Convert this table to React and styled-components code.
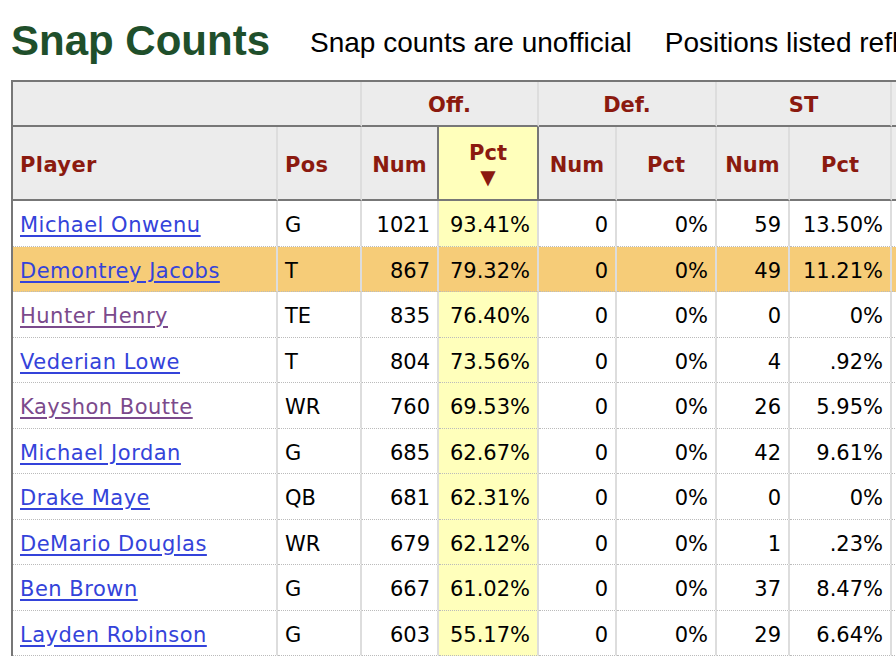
import React from "react";
import styled, { createGlobalStyle } from "styled-components";

const GlobalStyle = createGlobalStyle`
  html, body {
    margin: 0;
    padding: 0;
    background: #fff;
    overflow: hidden;
  }
`;

const Page = styled.div`
  width: 896px;
  height: 658px;
  overflow: hidden;
  padding: 20px 0 0 11px;
  box-sizing: border-box;
`;

const Heading = styled.div`
  display: flex;
  align-items: flex-start;
  white-space: nowrap;
  height: 41px;
  margin-bottom: 19px;
`;

const Title = styled.h1`
  margin: 0;
  font-family: "Liberation Sans", Arial, sans-serif;
  font-weight: bold;
  font-size: 42px;
  line-height: 41px;
  color: #1f4f2b;
`;

const Note = styled.span`
  font-family: "Liberation Sans", Arial, sans-serif;
  font-size: 28px;
  line-height: 32px;
  color: #000;
  margin: 7px 0 0 ${(p) => p.$gap}px;
`;

const Table = styled.table`
  border-collapse: separate;
  border-spacing: 0;
  table-layout: fixed;
  width: 982px;
  border-top: 2px solid #777;
  border-left: 2px solid #777;
  font-family: "DejaVu Sans", Verdana, sans-serif;
  font-size: 21px;
`;

const Col = styled.col`
  width: ${(p) => p.$w}px;
`;

const Th = styled.th`
  box-sizing: border-box;
  background: ${(p) => (p.$sorted ? "#ffffbb" : "#ececec")};
  color: #8b1a0f;
  font-weight: bold;
  text-align: ${(p) => p.$align || "center"};
  vertical-align: middle;
  padding: ${(p) => p.$shift}px 7px 0 7px;
  line-height: 24px;
  letter-spacing: ${(p) => (p.$align === "left" ? "0.4px" : "0")};
  height: ${(p) => p.$h}px;
  border-right: 2px solid ${(p) => (p.$dark ? "#777" : "#ddd")};
  border-bottom: 2px solid #777;
`;

const Arrow = styled.div`
  font-size: 20px;
  line-height: 24px;
`;

const Row = styled.tr`
  background: ${(p) => (p.$hl ? "#f6cc78" : "#fff")};
`;

const Td = styled.td`
  box-sizing: border-box;
  padding: 12px 7px 8px 7px;
  line-height: 24.5px;
  color: #000;
  white-space: nowrap;
  overflow: hidden;
  text-align: ${(p) => p.$align || "right"};
  background: ${(p) => (p.$sorted && !p.$hl ? "#ffffbb" : "transparent")};
  border-right: 2px solid #ddd;
  border-bottom: 1px dotted #bbb;
`;

const PlayerLink = styled.a`
  color: ${(p) => (p.$visited ? "#7b4a8c" : "#3443da")};
  text-decoration: underline;
  text-underline-offset: 3px;
  letter-spacing: 0.5px;
  cursor: pointer;
`;

const players = [
  ["Michael Onwenu", "G", 1021, "93.41%", 0, "0%", 59, "13.50%"],
  ["Demontrey Jacobs", "T", 867, "79.32%", 0, "0%", 49, "11.21%", "hl"],
  ["Hunter Henry", "TE", 835, "76.40%", 0, "0%", 0, "0%", "visited"],
  ["Vederian Lowe", "T", 804, "73.56%", 0, "0%", 4, ".92%"],
  ["Kayshon Boutte", "WR", 760, "69.53%", 0, "0%", 26, "5.95%", "visited"],
  ["Michael Jordan", "G", 685, "62.67%", 0, "0%", 42, "9.61%"],
  ["Drake Maye", "QB", 681, "62.31%", 0, "0%", 0, "0%"],
  ["DeMario Douglas", "WR", 679, "62.12%", 0, "0%", 1, ".23%"],
  ["Ben Brown", "G", 667, "61.02%", 0, "0%", 37, "8.47%"],
  ["Layden Robinson", "G", 603, "55.17%", 0, "0%", 29, "6.64%"],
];

const widths = [265, 84, 77, 100, 78, 100, 73, 102, 103];

const App = () => {
  return (
    <Page>
      <GlobalStyle />
      <Heading>
        <Title>Snap Counts</Title>
        <Note $gap={40}>Snap counts are unofficial</Note>
        <Note $gap={33}>Positions listed reflect the player's primary role</Note>
      </Heading>
      <Table>
        <colgroup>
          {widths.map((w, i) => (
            <Col key={i} $w={w} />
          ))}
        </colgroup>
        <thead>
          <tr>
            <Th colSpan={2} $h={45} $shift={2}></Th>
            <Th colSpan={2} $h={45} $shift={2}>Off.</Th>
            <Th colSpan={2} $h={45} $shift={2}>Def.</Th>
            <Th colSpan={2} $h={45} $shift={2}>ST</Th>
            <Th $h={45} $shift={2}></Th>
          </tr>
          <tr>
            <Th $align="left" $h={74} $shift={4}>Player</Th>
            <Th $align="left" $h={74} $shift={4}>Pos</Th>
            <Th $h={74} $shift={4} $dark>Num</Th>
            <Th $h={74} $shift={4} $sorted $dark>
              Pct
              <Arrow>▼</Arrow>
            </Th>
            <Th $h={74} $shift={4}>Num</Th>
            <Th $h={74} $shift={4}>Pct</Th>
            <Th $h={74} $shift={4}>Num</Th>
            <Th $h={74} $shift={4}>Pct</Th>
            <Th $h={74} $shift={4}></Th>
          </tr>
        </thead>
        <tbody>
          {players.map((p) => {
            const hl = p[8] === "hl";
            return (
              <Row key={p[0]} $hl={hl}>
                <Td $align="left">
                  <PlayerLink $visited={p[8] === "visited"}>{p[0]}</PlayerLink>
                </Td>
                <Td $align="left">{p[1]}</Td>
                <Td>{p[2]}</Td>
                <Td $sorted $hl={hl}>{p[3]}</Td>
                <Td>{p[4]}</Td>
                <Td>{p[5]}</Td>
                <Td>{p[6]}</Td>
                <Td>{p[7]}</Td>
                <Td></Td>
              </Row>
            );
          })}
        </tbody>
      </Table>
    </Page>
  );
};

export default App;
